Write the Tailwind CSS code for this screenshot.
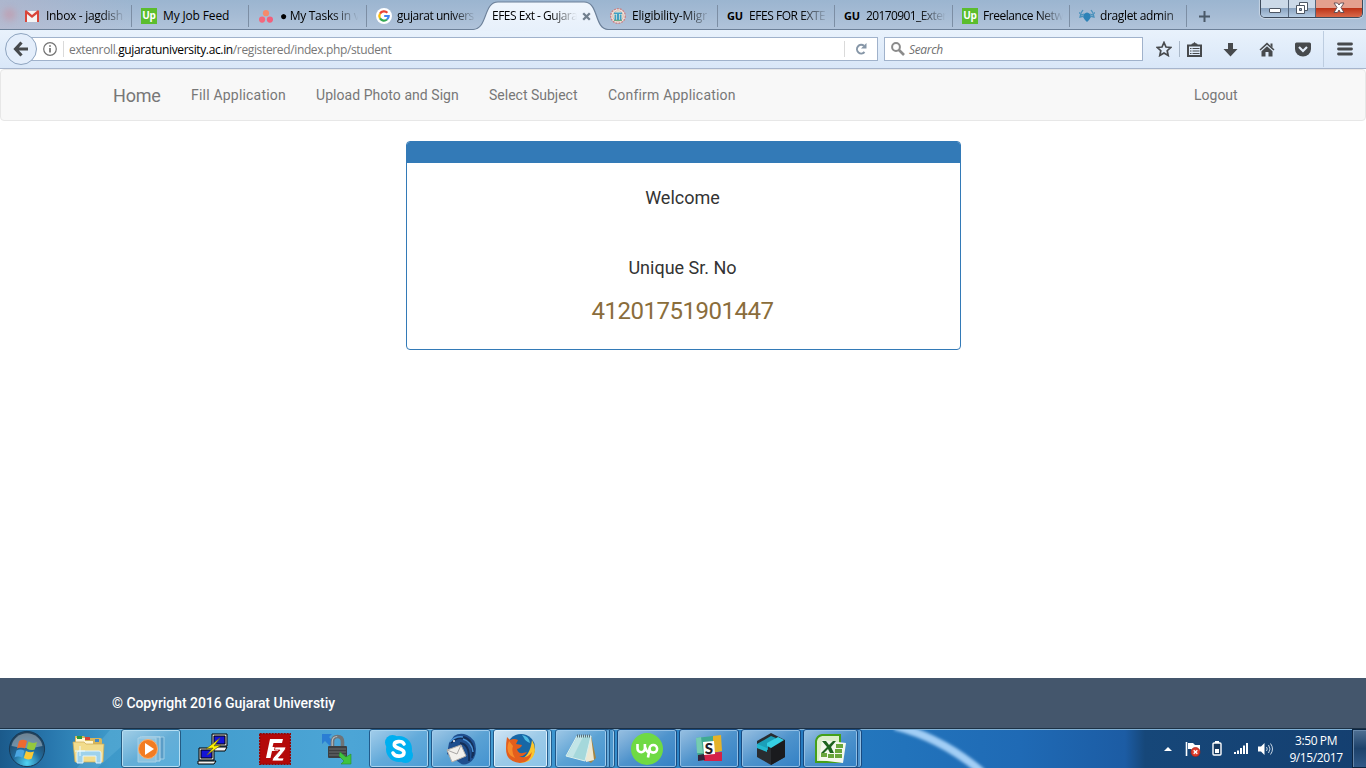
<!DOCTYPE html>
<html lang="en">
<head>
<meta charset="utf-8">
<title>EFES Ext - Gujarat University</title>
<script src="https://cdn.jsdelivr.net/npm/@tailwindcss/browser@4"></script>
</head>
<body class="w-[1366px] h-[768px] overflow-hidden bg-white flex flex-col font-['Open_Sans','Noto_Sans',sans-serif] text-[12px] text-black">

<!-- Tab strip -->
<header class="relative h-[30px] shrink-0 flex items-start border-b border-[#6c8099] bg-linear-to-b from-[#9bb5d0] via-[#a5bbd4] to-[#b0c3da] whitespace-nowrap">
  <div class="absolute left-0 top-0 w-[130px] h-[29px] bg-linear-to-r from-[#b9b7cc]/60 to-transparent"></div>
  <div class="absolute left-[3px] top-[8px] size-[13px] rounded-full bg-[#c98fa0]/50 blur-[3px]"></div>
  <div class="relative z-10 flex h-[29px] pl-[14px] pt-[5px]">
    <div class="w-[118px] h-[22px] border-r border-[#7c8ea4] flex items-center pl-[11px] gap-[7px]">
      <svg class="w-[14px] h-[12px] shrink-0" viewBox="0 0 14 12"><path d="M0 1h14v11H0z" fill="#f4f4f4"/><path d="M0 12V1l1-1 6 5 6-5 1 1v11h-2V4L7 8 2 4v8z" fill="#d9463b"/></svg>
      <span class="w-[79px] tracking-[-0.3px] [mask-image:linear-gradient(to_right,black_70%,transparent)]">Inbox - jagdish</span>
    </div>
    <div class="w-[117px] h-[22px] border-r border-[#7c8ea4] flex items-center pl-[9px] gap-[6px]">
      <span class="size-4 shrink-0 bg-[#5bbd2d] text-white font-bold text-[10px] leading-[14px] text-center tracking-[-0.3px]">Up</span>
      <span class="tracking-[-0.15px]">My Job Feed</span>
    </div>
    <div class="w-[118px] h-[22px] border-r border-[#7c8ea4] flex items-center pl-[10px] gap-[7px]">
      <svg class="w-[14px] h-[13px] shrink-0" viewBox="0 0 14 13"><circle cx="7" cy="3.2" r="3.1" fill="#f68a6b"/><circle cx="3.1" cy="9.6" r="3.1" fill="#f4687c"/><circle cx="10.9" cy="9.6" r="3.1" fill="#f2607c"/></svg>
      <span class="w-[80px] tracking-[-0.3px] [mask-image:linear-gradient(to_right,black_65%,transparent_98%)]">● My Tasks in v</span>
    </div>
    <div class="w-[113px] h-[22px] flex items-center pl-[9px] gap-[5px]">
      <svg class="size-4 shrink-0" viewBox="0 0 16 16"><circle cx="8" cy="8" r="8" fill="#fff"/><g fill="none" stroke-width="2.2"><path d="M11.4 4.7A4.7 4.7 0 0 0 4 5.6" stroke="#ea4335"/><path d="M4 5.6a4.7 4.7 0 0 0 0 4.8" stroke="#fbbc05"/><path d="M4 10.4a4.7 4.7 0 0 0 7 1.1" stroke="#34a853"/><path d="M11 11.5A4.7 4.7 0 0 0 12.7 8H8.2" stroke="#4285f4"/></g></svg>
      <span class="w-[79px] tracking-[-0.45px] [mask-image:linear-gradient(to_right,black_70%,transparent)]">gujarat univers</span>
    </div>
    <div class="relative w-[120px] h-[22px] flex items-center pl-[12px] gap-[5px]">
      <svg class="absolute left-[-10px] top-[-5px] w-[142px] h-[31px]" viewBox="0 0 142 31"><defs><linearGradient id="act" x2="0" y2="1"><stop stop-color="#f0f6fd"/><stop offset="1" stop-color="#e7f0fb"/></linearGradient></defs><path d="M3 29.5C18 29 13 2 28 2H114C129 2 124 29 138 29.5V31H3Z" fill="url(#act)"/><path d="M3 29.5C18 29 13 2 28 2H114C129 2 124 29 138 29.5" fill="none" stroke="#6c8099" stroke-width="1.2"/></svg>
      <span class="relative w-[85px] tracking-[-0.5px] [mask-image:linear-gradient(to_right,black_70%,transparent)]">EFES Ext - Gujara</span>
      <svg class="relative size-[9px]" viewBox="0 0 9 9"><path d="M1.2 1.2l6.6 6.6M7.8 1.2L1.2 7.8" stroke="#717f8e" stroke-width="2.3"/></svg>
    </div>
    <div class="w-[118px] h-[22px] border-r border-[#7c8ea4] flex items-center pl-[10px] gap-[6px]">
      <svg class="size-4 shrink-0" viewBox="0 0 16 16"><circle cx="8" cy="8" r="7.3" fill="#f0e1d9" stroke="#ca8184" stroke-width="1.3" stroke-dasharray="2 1"/><circle cx="8" cy="8" r="5.2" fill="#e9eadb" stroke="#c9a9a0" stroke-width=".7"/><path d="M4 4.500h8v1.500H4zM4.500 6.500h1.800V12H4.500zM9.700 6.500h1.800V12H9.700zM7 6h2v6H7z" fill="#3f9fc4"/><path d="M4 12.300h8" stroke="#4b9f72"/></svg>
      <span class="w-[79px] tracking-[-0.2px] [mask-image:linear-gradient(to_right,black_65%,transparent)]">Eligibility-Migr</span>
    </div>
    <div class="w-[117px] h-[22px] border-r border-[#7c8ea4] flex items-center pl-[9px] gap-[6px]">
      <span class="w-[16px] font-bold text-[11px] tracking-[-0.2px]">GU</span>
      <span class="w-[79px] tracking-[-0.45px] [mask-image:linear-gradient(to_right,black_65%,transparent)]">EFES FOR EXTE</span>
    </div>
    <div class="w-[118px] h-[22px] border-r border-[#7c8ea4] flex items-center pl-[9px] gap-[6px]">
      <span class="w-[16px] font-bold text-[11px] tracking-[-0.2px]">GU</span>
      <span class="w-[80px] tracking-[-0.6px] [mask-image:linear-gradient(to_right,black_65%,transparent)]">20170901_Exter</span>
    </div>
    <div class="w-[117px] h-[22px] border-r border-[#7c8ea4] flex items-center pl-[9px] gap-[5px]">
      <span class="size-4 shrink-0 bg-[#5bbd2d] text-white font-bold text-[10px] leading-[14px] text-center tracking-[-0.3px]">Up</span>
      <span class="w-[80px] tracking-[-0.45px] [mask-image:linear-gradient(to_right,black_70%,transparent)]">Freelance Netw</span>
    </div>
    <div class="w-[117px] h-[22px] border-r border-[#7c8ea4] flex items-center pl-[9px] gap-[5px]">
      <svg class="w-4 h-[14px] shrink-0" viewBox="0 0 16 14"><path d="M5 5c2-2 4-2 6 0l1 3-2 3-2 2-2-2-2-3z" fill="#2d82b7"/><path d="M5 7L1 8l1-4 2-3M1 4H0M2 6l3-1M11 7l4 1-1-4-2-3M15 4h1M14 6l-3-1" fill="none" stroke="#4a91bc" stroke-width="1.3"/></svg>
      <span class="w-[79px] tracking-[-0.35px] [mask-image:linear-gradient(to_right,black_75%,#0008)]">draglet admin</span>
    </div>
    <svg class="ml-[12px] mt-[6px] size-[11px]" viewBox="0 0 11 11"><path d="M5.5 0v11M0 5.5h11" stroke="#4a5968" stroke-width="2"/></svg>
  </div>
  <div class="relative z-10 ml-auto mr-[3px] h-[18px] w-[103px] flex rounded-b-[5px] border border-t-0 border-[#3d4a5b] overflow-hidden shadow-[0_0_1px_1px_#ffffff66]">
    <div class="w-[28px] border-r border-[#55657a] bg-linear-to-b from-[#cbd9e8] from-45% via-[#8ba4c1] via-50% to-[#b5cbe2] flex justify-center"><svg class="w-[14px] h-[17px]" viewBox="0 0 14 17"><rect x="1.5" y="8.5" width="11" height="4" rx=".5" fill="#fff" stroke="#4d5663"/></svg></div>
    <div class="w-[27px] border-r border-[#55657a] bg-linear-to-b from-[#cbd9e8] from-45% via-[#8ba4c1] via-50% to-[#b5cbe2] flex justify-center"><svg class="w-[14px] h-[17px]" viewBox="0 0 14 17"><path d="M4.5 2.5h8v8h-8z" fill="#fff" stroke="#4d5663"/><path d="M1.5 5.5h8v8h-8z" fill="#fff" stroke="#4d5663"/><path d="M4.5 8.5h2v2h-2z" fill="#a4b6cc" stroke="#4d5663"/></svg></div>
    <div class="flex-1 bg-linear-to-b from-[#e4a08e] from-45% via-[#bd3317] via-50% to-[#d9694a] flex justify-center"><svg class="w-[14px] h-[17px]" viewBox="0 0 14 17"><path d="M2 3h3.5L7 5l1.500-2H12L9 7.500l3 5H8.500L7 10l-1.500 2.500H2l3-5z" fill="#fff" stroke="#5c4a50" stroke-width=".9"/></svg></div>
  </div>
</header>

<!-- Browser toolbar -->
<div class="h-[39px] shrink-0 border-b border-[#a7b5cc] bg-linear-to-b from-[#e9f2fc] to-[#d9e7f8] flex items-center pl-[5px]">
  <div class="relative z-10 size-8 rounded-full border border-[#8ea4bf] bg-[#e4eefb] flex items-center justify-center">
    <svg class="w-[16px] h-[16px]" viewBox="0 0 16 16"><path d="M8.5 1.500L2.500 8l6 6.500M3 8h12" fill="none" stroke="#474a4d" stroke-width="3.1"/></svg>
  </div>
  <div class="ml-[-6px] h-[24px] w-[847px] border border-[#a0b2cb] bg-white flex items-center">
    <svg class="ml-[11px] size-[14px]" viewBox="0 0 14 14"><circle cx="7" cy="7" r="6.3" fill="none" stroke="#737373" stroke-width="1.2"/><path d="M7 6v4.500M7 3.300v1.500" stroke="#666" stroke-width="1.6"/></svg>
    <span class="ml-[6px] h-4 border-l border-[#dadada]"></span>
    <span class="ml-[5px] pt-[2px] whitespace-nowrap text-[#777] tracking-[-0.36px]">extenroll.<span class="text-black">gujaratuniversity.ac.in</span>/registered/index.php/student</span>
    <span class="ml-auto h-4 border-l border-[#dadada]"></span>
    <svg class="ml-[10px] mr-[10px] size-[12px]" viewBox="0 0 12 12"><path d="M9.500 9A4.300 4.300 0 1 1 9 2.800" fill="none" stroke="#8696a7" stroke-width="2"/><path d="M11.500 0v5.500H6z" fill="#8696a7"/></svg>
  </div>
  <div class="ml-[6px] h-[24px] w-[259px] border border-[#a0b2cb] bg-white flex items-center">
    <svg class="ml-[6px] size-[14px]" viewBox="0 0 14 14"><circle cx="5" cy="5" r="3.900" fill="none" stroke="#8b8b8b" stroke-width="2"/><path d="M8 8l5 5" stroke="#8b8b8b" stroke-width="2.600"/></svg>
    <span class="ml-[4px] pt-[2px] italic text-[#707070] tracking-[-0.35px]">Search</span>
  </div>
  <svg class="ml-[13px] size-4" viewBox="0 0 16 16"><path d="M8 1.500l2 4.500 4.800.5-3.600 3.200 1 4.800L8 12l-4.200 2.500 1-4.800L1.200 6.500 6 6z" fill="none" stroke="#474a4d" stroke-width="1.700"/></svg>
  <span class="ml-[7px] h-4 border-l border-[#aab8c9]"></span>
  <svg class="ml-[7px] w-[15px] h-[15px]" viewBox="0 0 15 15"><path d="M1 3.500h13v10.500H1z" fill="none" stroke="#474a4d" stroke-width="2"/><path d="M4 3.500l1-2h1L7.500 0 9 1.500h1l1 2zM3 6h1.500v1H3zM3 8.500h1.500v1H3zM3 11h1.500v1H3zM5.500 6h7v1h-7zM5.500 8.500h7v1h-7zM5.500 11h7v1h-7z" fill="#474a4d"/></svg>
  <svg class="ml-[21px] w-[15px] h-[15px]" viewBox="0 0 15 15"><path d="M5 1h5v6h4.500L7.500 14.500.5 7H5z" fill="#474a4d"/></svg>
  <svg class="ml-[21px] w-[16px] h-[15px]" viewBox="0 0 16 15"><path d="M8 .5l7.500 7-1 1L8 2.700 1.500 8.500l-1-1zM11.500 1.500h2v4l-2-2zM8 4.200l5.500 5V14.500h-4V10h-3v4.500h-4V9.200z" fill="#474a4d"/></svg>
  <svg class="ml-[20px] w-[16px] h-[15px]" viewBox="0 0 16 15"><path d="M1.500.5h13Q16 .5 16 2v5a8 7.500 0 0 1-16 0V2Q0 .5 1.500.5z" fill="#474a4d"/><path d="M4 5l4 4 4-4" fill="none" stroke="#e4eefa" stroke-width="2.200"/></svg>
  <span class="ml-[12px] h-[36px] border-l border-[#bdcde0]"></span>
  <svg class="ml-[13px] w-[16px] h-[14px]" viewBox="0 0 16 14"><path d="M1.500 2h13M1.500 7h13M1.500 12h13" stroke="#474a4d" stroke-width="2.800" stroke-linecap="round"/></svg>
</div>

<!-- Page -->
<main class="flex-1 flex flex-col font-['Roboto','Noto_Sans',sans-serif] text-[14px]">
  <nav class="h-[52px] shrink-0 border border-[#e7e7e7] rounded-[4px] bg-[#f8f8f8] flex items-center pl-[112px] pr-[127px] gap-[30px] text-[#777] whitespace-nowrap">
    <a class="text-[18px] w-[48px] tracking-[-0.2px]">Home</a>
    <a class="w-[95px] tracking-[0.2px]">Fill Application</a>
    <a class="w-[143px] tracking-[0.05px]">Upload Photo and Sign</a>
    <a class="w-[89px]">Select Subject</a>
    <a class="w-[127px] tracking-[0.2px]">Confirm Application</a>
    <a class="ml-auto w-[44px]">Logout</a>
  </nav>
  <section class="mt-[20px] mx-auto w-[555px] h-[209px] relative left-[0.5px] border border-[#337ab7] rounded-[4px] overflow-hidden text-center text-[#333]">
    <div class="h-[21px] bg-[#337ab7]"></div>
    <h4 class="mt-[25px] text-[18px] leading-5 pr-[2px]">Welcome</h4>
    <h4 class="mt-[50px] text-[18px] leading-5 pr-[2px]">Unique Sr. No</h4>
    <h3 class="mt-[20px] text-[24px] leading-[26px] text-[#8a6d3b] pr-[2px] tracking-[-0.5px]">41201751901447</h3>
  </section>
  <footer class="mt-auto h-[50px] bg-[#44566c] text-white flex items-center pl-[112px]"><span class="font-medium tracking-[-0.05px]">© Copyright 2016 Gujarat Universtiy</span></footer>
</main>

<!-- Taskbar -->
<div class="relative h-[40px] shrink-0 border-t border-[#1d3145] shadow-[inset_0_1px_0_#7fb0d5] flex items-center bg-[linear-gradient(90deg,#1b5a8b_0,#2877ad_50px,#3e99c9_110px,#4ca5d6_350px,#429bd2_500px,#2b83c6_700px,#2376bd_865px,#1f6ab5_1020px,#1c5ca4_1125px,#164779_1145px,#143f70_1366px)]">
  <svg class="absolute left-0 top-[1px] w-[1366px] h-[38px]" viewBox="0 0 1366 38"><defs><filter id="soft" x="-20%" y="-20%" width="140%" height="140%"><feGaussianBlur stdDeviation="1.800"/></filter></defs><path d="M895-4Q942 8 982 42" fill="none" stroke="#a2cef5" stroke-width="8" filter="url(#soft)"/><path d="M75 40L110 0h30L95 40z" fill="#8ed0ee" opacity=".2"/></svg>
  <div class="relative w-[58px] flex pl-[8px]">
    <svg class="size-[38px]" viewBox="0 0 38 38"><defs><radialGradient id="orb" cx=".5" cy=".9" r=".8"><stop stop-color="#51d5f4"/><stop offset=".5" stop-color="#226b9d"/><stop offset="1" stop-color="#23425c"/></radialGradient></defs><circle cx="19" cy="19" r="17.600" fill="url(#orb)" stroke="#183a57"/><path d="M3.500 16a15.800 15.800 0 0 1 31 0Q19 20 3.500 16z" fill="#fff" opacity=".35"/><path d="M11 11q4-2.500 8 0l-2 7.500q-4-2-8 0z" fill="#ec6a31"/><path d="M20.500 11.500q4 2.500 8.500.500l-2.300 7.500q-4 1.500-8-1z" fill="#94c83d"/><path d="M8.500 20.500q4-2 8 .300l-2.200 7q-4-2.300-7.800-.300z" fill="#4ba6e2"/><path d="M18 21q4 2.300 8 .500l-2.200 7q-4 2-8-.500z" fill="#fbc935"/></svg>
  </div>
  <div class="relative w-[62px] flex justify-center">
    <svg class="w-[34px] h-[32px]" viewBox="0 0 34 32"><path d="M3 3h9l2 2h14q2 0 2 2v20H3z" fill="#d8b659"/><path d="M4 5h9v3h8v3h10v15H4z" fill="#fff6d2"/><path d="M5 3h5v3H5z" fill="#2f9a3b"/><path d="M13 4h5v3h-5z" fill="#d54335"/><path d="M23 6h4v3h-4z" fill="#3f88cb"/><path d="M1 9h11l2 2h18l-1 18H3z" fill="#f2dc8c" stroke="#cba954" stroke-width=".7"/><path d="M5 30V20q0-2 2-2h20q2 0 2 2v10h-5v-7H11v7z" fill="#9ed2ec" stroke="#e1f4fe"/><path d="M8 13v10M3 18h10" stroke="#e9fbff"/></svg>
  </div>
  <div class="relative w-[62px] flex justify-center">
    <div class="w-[60px] h-[39px] rounded-[3px] border border-[#245b83] shadow-[inset_0_0_0_1px_#b6def2] bg-linear-to-br from-[#a3cfe7] via-[#65aed7] to-[#58aedb] flex items-center justify-center">
      <svg class="w-[32px] h-[30px]" viewBox="0 0 32 30"><path d="M7 3h22v22H7z" fill="#5b9dc7" stroke="#a0cee6"/><path d="M5 3h20v24H5z" fill="#78b4d5" stroke="#b5d8eb"/><path d="M3 4h18v24H3z" fill="#8cc3df" stroke="#a7cfe5"/><circle cx="13" cy="15" r="9.500" fill="#f27c22" stroke="#fbb070"/><path d="M10 9l9 6-9 6z" fill="#fff"/></svg>
    </div>
  </div>
  <div class="relative w-[62px] flex justify-center">
    <svg class="size-8" viewBox="0 0 32 32"><g stroke="#000" stroke-width="1"><path d="M15 1h15v12H15z" fill="#d5d5d5"/><path d="M17 3h11v8H17z" fill="#1414d6"/><path d="M14 14h16l-2 4H13z" fill="#f3f3f3"/><path d="M2 15h15v12H2z" fill="#d5d5d5"/><path d="M4 17h11v8H4z" fill="#1414d6"/><path d="M1 28h18l-2 3H1z" fill="#f3f3f3"/></g><path d="M23 5L9 16l7-1-6 7 14-10-7 1z" fill="#fff500" stroke="#69601a" stroke-width=".7"/></svg>
  </div>
  <div class="relative w-[62px] flex justify-center">
    <svg class="size-8" viewBox="0 0 32 32"><path d="M.7.7h30.600v30.600H.7z" fill="#b40909" stroke="#8f0808" stroke-width="1.400" stroke-dasharray="2 1"/><path d="M7 25l4-19h13l-1 4h-8.500l-1 4H20l-1 4h-6l-1.500 7z" fill="#fff"/><path d="M16 14h11l-1 3-6.500 8H25l-1 3H13l1-3 7-8h-5.500z" fill="#fff" stroke="#b40909" stroke-width=".8"/></svg>
  </div>
  <div class="relative w-[62px] flex justify-center">
    <svg class="w-[32px] h-[32px]" viewBox="0 0 32 32"><path d="M1 1h10L8 4l5 5-4 4-5-5-3 3z" fill="#2a7ed4"/><path d="M11.500 15V9q0-5.500 5-5.500t5 5.500v6" fill="none" stroke="#6e7478" stroke-width="3.600"/><path d="M11.200 15V9q0-5.500 5-5.500" fill="none" stroke="#b9bec1" stroke-width="1.200"/><rect x="7" y="13" width="19" height="12" rx="1" fill="#3d3f41"/><path d="M8 16h17M8 19h17M8 22h17" stroke="#6c6f71"/><path d="M19 19l6 5 5-3v10H20l3-3-5-5z" fill="#3fc43f" stroke="#2a8f2e" stroke-width=".6"/></svg>
  </div>
  <div class="relative w-[62px] flex justify-center">
    <div class="w-[60px] h-[39px] rounded-[3px] border border-[#225b8b] shadow-[inset_0_0_0_1px_#a9d4ef] bg-linear-to-br from-[#a3cdea] via-[#62aada] to-[#4c9dd6] flex items-center justify-center">
      <svg class="size-[30px]" viewBox="0 0 30 30"><circle cx="15" cy="15" r="13" fill="#00aff0"/><circle cx="8.500" cy="8.500" r="7.500" fill="#00aff0"/><circle cx="21.500" cy="21.500" r="7.500" fill="#00aff0"/><path d="M20 10C18 6.300 10 7 10.300 11s9.700 3 9.700 7.500-9 5-11 .500" fill="none" stroke="#fff" stroke-width="3.600" stroke-linecap="round"/></svg>
    </div>
  </div>
  <div class="relative w-[62px] flex justify-center">
    <div class="w-[60px] h-[39px] rounded-[3px] border border-[#205788] shadow-[inset_0_0_0_1px_#a0ccec] bg-linear-to-br from-[#9fc8e6] via-[#5ba2d4] to-[#4493d0] flex items-center justify-center">
      <svg class="size-8" viewBox="0 0 32 32"><path d="M4 10L9 3q6-4 13-1 9 4 9 14t-7 14q-6 3-9 0L2 21z" fill="#1f4f8f"/><path d="M6 10q8-9 17-2 6 6 4 17M11 5q11-4 16 6 3 6 1 12M15 10q10 1 9 18" fill="none" stroke="#142f58" stroke-width="1.800"/><path d="M5 9q5-6 13-5M18 6q9 3 10 13" fill="none" stroke="#4b93d8" stroke-width="1.500"/><path d="M2 17l14-5 5 11-14 6z" fill="#f2f0ec" stroke="#b5afa8"/><path d="M2 17l10 4 4-9" fill="none" stroke="#a9a6a4"/><circle cx="9" cy="8" r="1" fill="#fff"/></svg>
    </div>
  </div>
  <div class="relative w-[62px] flex pl-[1px]">
    <div class="z-10 w-[55px] h-[39px] rounded-[3px] border border-[#225b8b] shadow-[inset_0_0_0_1px_#dceffb] bg-linear-to-br from-[#d2e6f4] via-[#9ccae8] to-[#8bc4e8] flex items-center justify-center">
      <svg class="size-[31px]" viewBox="0 0 31 31"><circle cx="16" cy="15" r="14" fill="#1767a6"/><path d="M17 2q7 1 8 8-5-2-6-5z" fill="#4dbbe2"/><path d="M27 7q3 5 3 10-1 12-14 13l-3-3q12-2 14-20z" fill="#fbc52d"/><path d="M2 4l3 3q4-2 8 0l-2 4 6 1q-1 3-5 4 1 5 6 4l4-1q-3 5-8 4 7 4 13-4-2 11-12 11Q1 29 1 16q0-7 1-12z" fill="#e45e1c"/><path d="M4 8q-5 13 6 17-4-6-2-12z" fill="#f78b2b"/></svg>
    </div>
    <div class="ml-[-3px] w-[7px] h-[39px] rounded-r-[3px] border border-[#225b8b] shadow-[inset_-1px_0_0_#bfe2f6] bg-[#74b6e0]"></div>
  </div>
  <div class="relative w-[62px] flex pl-[1px]">
    <div class="z-10 w-[52px] h-[39px] rounded-[3px] border border-[#205788] shadow-[inset_0_0_0_1px_#a0ccec] bg-linear-to-br from-[#9fc8e6] via-[#5ba2d4] to-[#4493d0] flex items-center justify-center">
      <svg class="w-[32px] h-[30px]" viewBox="0 0 32 30"><path d="M26 2l5 22-5 5-4-3z" fill="#a38442"/><path d="M14 2h12l3 24-8 2z" fill="#eee8d2"/><path d="M12 2h14l-6 25L1 22z" fill="#a5d8db" stroke="#dcf0ee"/><path d="M12 3h6L8 23l-6-1z" fill="#d5efee" opacity=".6"/><path d="M12 2h14" stroke="#58707a" stroke-width="3" stroke-dasharray="1 1"/></svg>
    </div>
    <div class="ml-[-3px] w-[7px] h-[39px] rounded-r-[3px] border border-[#205788] bg-[#62a7d8]"></div>
    <div class="ml-[-2px] w-[6px] h-[39px] rounded-r-[3px] border border-[#205788] shadow-[inset_-1px_0_0_#a0ccec] bg-[#4c97cd]"></div>
  </div>
  <div class="relative w-[62px] flex justify-center">
    <div class="w-[60px] h-[39px] rounded-[3px] border border-[#184a80] shadow-[inset_0_0_0_1px_#92bfe4] bg-linear-to-br from-[#98c0e1] via-[#4e93cc] to-[#3381c5] flex items-center justify-center">
      <svg class="size-8" viewBox="0 0 32 32"><circle cx="16" cy="16" r="16" fill="#6fda44"/><path d="M6.500 11v4.500a3.700 3.700 0 0 0 7.400 0V11M13.900 14q1.500 4.500 4 5.500M17 24.500l1.700-9" fill="none" stroke="#fff" stroke-width="2.600"/><circle cx="22.300" cy="15.800" r="3.800" fill="none" stroke="#fff" stroke-width="2.600"/></svg>
    </div>
  </div>
  <div class="relative w-[62px] flex justify-center">
    <div class="w-[60px] h-[39px] rounded-[3px] border border-[#184a80] shadow-[inset_0_0_0_1px_#92bfe4] bg-linear-to-br from-[#98c0e1] via-[#4e93cc] to-[#3381c5] flex items-center justify-center">
      <svg class="w-[26px] h-[27px]" viewBox="0 0 26 27"><path d="M0 3L17 1v25L2 25z" fill="#40aa91"/><path d="M17 1l8-1 1 16-9 2z" fill="#e5b229"/><path d="M8 18l18-1v9L8 26z" fill="#d42148"/><path d="M0 3l5-1 2 16H1z" fill="#75ccb0"/><path d="M2 20l6-1 1 6-7 1z" fill="#35233c"/><path d="M7 7l11-1 1 13-11 1z" fill="#fff"/><text x="13" y="18.500" text-anchor="middle" font-family="Lato" font-weight="900" font-size="15" fill="#231c25">S</text></svg>
    </div>
  </div>
  <div class="relative w-[62px] flex justify-center">
    <div class="w-[60px] h-[39px] rounded-[3px] border border-[#184a80] shadow-[inset_0_0_0_1px_#92bfe4] bg-linear-to-br from-[#98c0e1] via-[#4e93cc] to-[#3381c5] flex items-center justify-center">
      <svg class="w-[28px] h-[32px]" viewBox="0 0 28 32"><path d="M14 0l14 7v17l-14 8L0 24V8z" fill="#292c30"/><path d="M14 15l14-8v17l-14 8z" fill="#1a1b1e"/><path d="M0 11l14-8 5 2-8 8v4L0 15z" fill="#1b9fb8"/><path d="M10 10l11-6 6 3-13 8-4-2z" fill="#35cfe3"/><path d="M0 11l10 4v4L0 15z" fill="#22b8cf"/></svg>
    </div>
  </div>
  <div class="relative w-[62px] flex pl-[1px]">
    <div class="z-10 w-[55px] h-[39px] rounded-[3px] border border-[#184a80] shadow-[inset_0_0_0_1px_#92bfe4] bg-linear-to-br from-[#98c0e1] via-[#4e93cc] to-[#3381c5] flex items-center justify-center">
      <svg class="w-[31px] h-[30px]" viewBox="0 0 31 30"><path d="M7 1h18v27H1V7q1-5 6-6z" fill="#dcefc9" stroke="#45a019" stroke-width="2"/><path d="M7 6l24 3-3 20-24-3z" fill="#f4f8ed"/><path d="M21 10h7v4h-7zM20 15h7v4h-7zM20 20h7v4h-7zM13 20h6v4h-6zM6 19h6v4H6z" fill="#69a63c"/><path d="M7 7h4l3 4 4-4h3l-5 6 3 6h-4l-2-4-4 4H6l6-6z" fill="#1d631e"/></svg>
    </div>
    <div class="ml-[-3px] w-[7px] h-[39px] rounded-r-[3px] border border-[#184a80] shadow-[inset_-1px_0_0_#92bfe4] bg-[#4b91cc]"></div>
  </div>
  <div class="relative ml-auto h-full flex items-center text-white">
    <svg class="w-[8px] h-[4px] mr-[13px]" viewBox="0 0 8 4"><path d="M0 4l4-4 4 4z" fill="#fff"/></svg>
    <svg class="w-[16px] h-[16px] mr-[11px]" viewBox="0 0 16 16"><path d="M1.500 1v14" stroke="#fff" stroke-width="1.600"/><path d="M3 2h5l2 2h5v6H8L6 8H3z" fill="#fff"/><circle cx="10.500" cy="11" r="4.500" fill="#df3e2c" stroke="#a51f17" stroke-width=".7"/><path d="M8.700 9.200l3.600 3.600m0-3.600l-3.600 3.600" stroke="#fff" stroke-width="1.400"/></svg>
    <svg class="w-[10px] h-[15px] mr-[12px]" viewBox="0 0 10 15"><path d="M3 0h4v2H3z" fill="#fff"/><rect x="1" y="2" width="8" height="12" rx="1" fill="#17395f" stroke="#fff" stroke-width="1.400"/><path d="M3 8h4v4H3z" fill="#fff"/></svg>
    <svg class="w-[15px] h-[11px] mr-[9px]" viewBox="0 0 15 11"><path d="M0 9h2v2H0zM3 7.500h2V11H3zM6 5h2v6H6zM9 2.500h2V11H9zM12 0h2v11h-2z" fill="#fff"/></svg>
    <svg class="w-[15px] h-[14px] mr-[16px]" viewBox="0 0 15 14"><path d="M0 4.500h3L6.500 1v12L3 9.500H0z" fill="#fff"/><path d="M8.500 5q1.500 2 0 4M10.500 3q3 4 0 8M12.500 1.500q4 5.500 0 11" fill="none" stroke="#dbe6f2" stroke-width=".9"/></svg>
    <div class="w-[54px] mr-[9px] text-center leading-[17px] tracking-[-0.4px] whitespace-nowrap">3:50 PM<br>9/15/2017</div>
    <div class="w-[14px] h-full border border-r-0 border-[#0b2542] shadow-[inset_1px_1px_0_#6787a9] bg-linear-to-b from-[#4f7093] via-[#1d426b] via-50% to-[#315987]"></div>
  </div>
</div>
</body>
</html>
